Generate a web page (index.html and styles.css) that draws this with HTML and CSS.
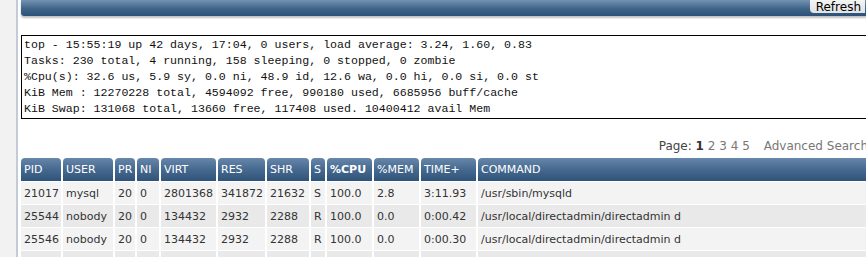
FILE: index.html
```html
<!DOCTYPE html>
<html lang="en">
<head>
  <meta charset="UTF-8" />
  <title>Process Monitor</title>
  <link rel="stylesheet" href="styles.css">
</head>
<body>
  <div class="gutter"></div>

  <div class="main">
    <!-- Title Bar -->
    <div class="title-bar">
      <button class="refresh-btn">Refresh</button>
    </div>

    <!-- top summary -->
    <pre class="top-summary">top - 15:55:19 up 42 days, 17:04, 0 users, load average: 3.24, 1.60, 0.83
Tasks: 230 total, 4 running, 158 sleeping, 0 stopped, 0 zombie
%Cpu(s): 32.6 us, 5.9 sy, 0.0 ni, 48.9 id, 12.6 wa, 0.0 hi, 0.0 si, 0.0 st
KiB Mem : 12270228 total, 4594092 free, 990180 used, 6685956 buff/cache
KiB Swap: 131068 total, 13660 free, 117408 used. 10400412 avail Mem</pre>

    <!-- Pager -->
    <div class="pager">
      <span class="pager-label">Page:</span>
      <b>1</b> <a href="#">2</a> <a href="#">3</a> <a href="#">4</a> <a href="#">5</a>
      <a href="#" class="adv-search">Advanced Search</a>
    </div>

    <!-- Process table -->
    <table class="proc-table">
      <colgroup>
        <col style="width: 40px">
        <col style="width: 50px">
        <col style="width: 20px">
        <col style="width: 22px">
        <col style="width: 55px">
        <col style="width: 47px">
        <col style="width: 42px">
        <col style="width: 14px">
        <col style="width: 45px">
        <col style="width: 45px">
        <col style="width: 55px">
        <col>
      </colgroup>
      <thead>
        <tr>
          <th>PID</th><th>USER</th><th>PR</th><th>NI</th><th>VIRT</th><th>RES</th>
          <th>SHR</th><th>S</th><th class="sorted">%CPU</th><th>%MEM</th><th>TIME+</th><th>COMMAND</th>
        </tr>
      </thead>
      <tbody>
        <tr>
          <td>21017</td><td>mysql</td><td>20</td><td>0</td><td>2801368</td><td>341872</td>
          <td>21632</td><td>S</td><td>100.0</td><td>2.8</td><td>3:11.93</td><td>/usr/sbin/mysqld</td>
        </tr>
        <tr>
          <td>25544</td><td>nobody</td><td>20</td><td>0</td><td>134432</td><td>2932</td>
          <td>2288</td><td>R</td><td>100.0</td><td>0.0</td><td>0:00.42</td><td>/usr/local/directadmin/directadmin d</td>
        </tr>
        <tr>
          <td>25546</td><td>nobody</td><td>20</td><td>0</td><td>134432</td><td>2932</td>
          <td>2288</td><td>R</td><td>100.0</td><td>0.0</td><td>0:00.30</td><td>/usr/local/directadmin/directadmin d</td>
        </tr>
        <tr>
          <td></td><td></td><td></td><td></td><td></td><td></td>
          <td></td><td></td><td></td><td></td><td></td><td></td>
        </tr>
      </tbody>
    </table>
  </div>
</body>
</html>
```

FILE: styles.css
```css
/* Basic Reset & Font */
* {
  margin: 0;
  padding: 0;
  box-sizing: border-box;
}
body {
  font-family: "DejaVu Sans", Verdana, sans-serif;
  font-size: 11px;
  color: #333;
  background: #fff;
  display: flex;
  height: 257px;
  overflow: hidden;
}

/* Left gutter */
.gutter {
  flex: 0 0 18px;
  background: #f2f2f2;
  border-right: 2px solid #c2cbd6;
}

/* Main column */
.main {
  flex: 0 0 850px;
  min-width: 0;
  padding-left: 3px;
}

/* Blue title bar */
.title-bar {
  height: 16px;
  background: linear-gradient(#7592b2, #3f6489 55%, #2c5179);
  border-radius: 0 0 3px 3px;
  box-shadow: 0 2px 2px rgba(0, 0, 0, 0.25);
  display: flex;
  justify-content: flex-end;
  align-items: flex-start;
  padding-right: 3px;
}
.refresh-btn {
  font-family: "DejaVu Sans", Verdana, sans-serif;
  font-size: 12px;
  color: #000;
  background: linear-gradient(#f4f4f4, #e2e2e2);
  border: none;
  border-radius: 0 0 0 4px;
  padding: 0 4px 0 6px;
  height: 13px;
  line-height: 12px;
}

/* top output box */
.top-summary {
  margin-top: 19px;
  border: 1px solid #000;
  padding: 1px 2px 1px;
  font-family: "Liberation Mono", "Courier New", monospace;
  font-size: 11.6px;
  line-height: 16px;
  color: #111;
  width: 860px;
}

/* Pager */
.pager {
  margin-top: 20px;
  text-align: right;
  color: #444;
  font-size: 12px;
  line-height: 15px;
  white-space: nowrap;
}
.pager a {
  color: #777;
  text-decoration: none;
}
.pager b {
  color: #333;
}
.pager .adv-search {
  margin-left: 10px;
}

/* Process table */
.proc-table {
  margin-top: 3px;
  margin-left: -2px;
  width: 852px;
  table-layout: fixed;
  border-collapse: separate;
  border-spacing: 2px 1px;
}
.proc-table th {
  height: 23px;
  background: linear-gradient(#6787aa, #45698f 50%, #2f5379);
  color: #fff;
  font-weight: normal;
  text-align: left;
  padding: 0 3px;
  border-radius: 4px 4px 0 0;
  white-space: nowrap;
  overflow: hidden;
}
.proc-table th.sorted {
  font-weight: bold;
}
.proc-table td {
  height: 22px;
  padding: 0 3px;
  white-space: nowrap;
  overflow: hidden;
  background: #f3f3f3;
}
.proc-table tbody tr:nth-child(even) td {
  background: #e9e9e9;
}
```
